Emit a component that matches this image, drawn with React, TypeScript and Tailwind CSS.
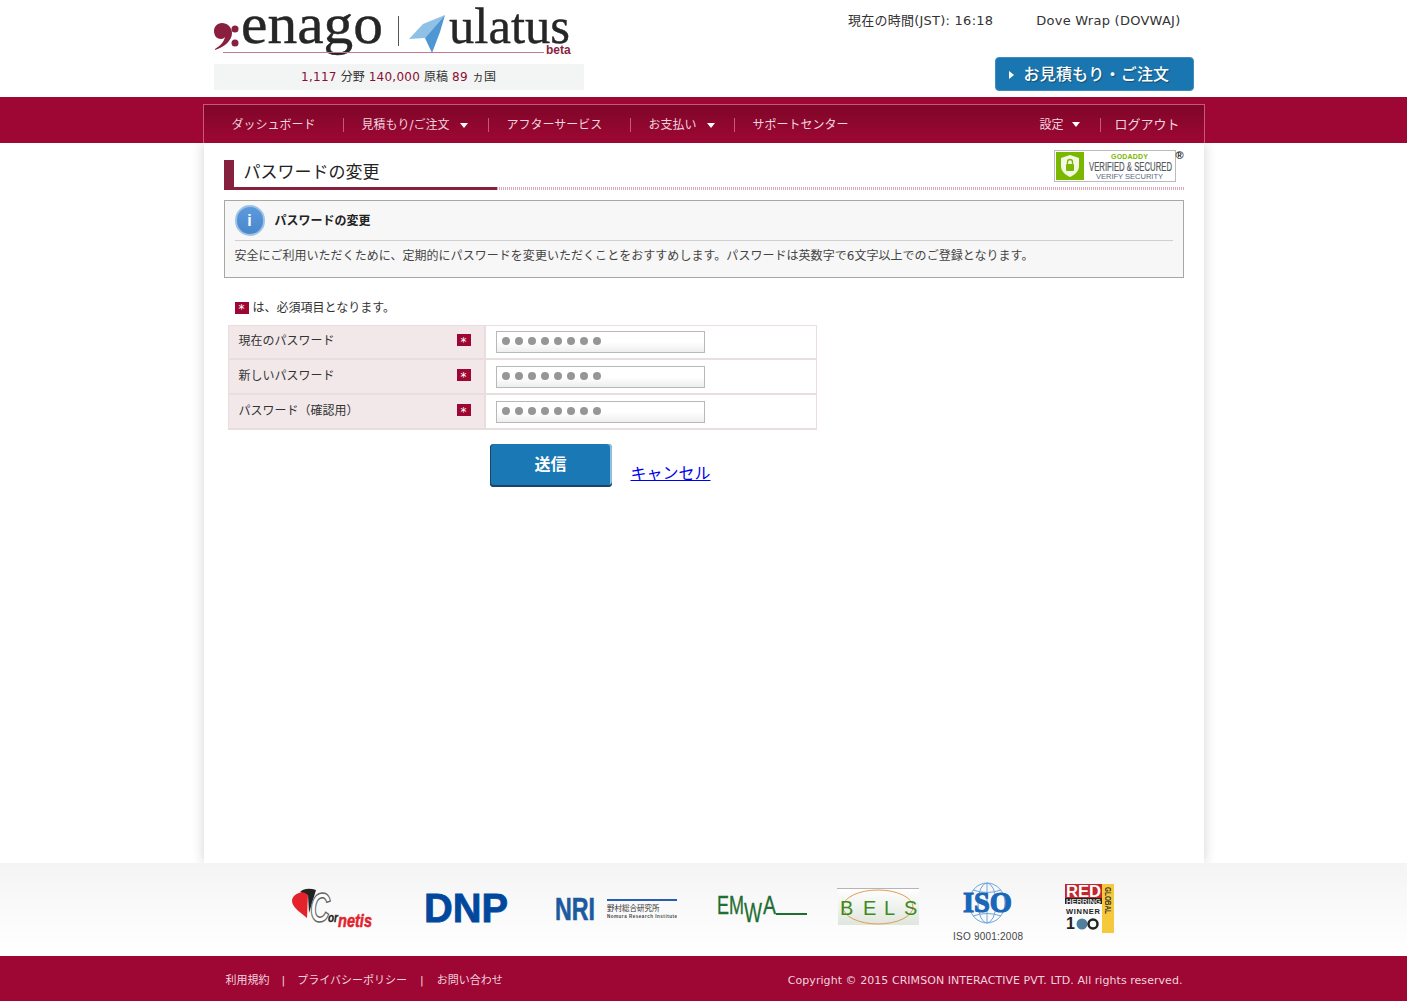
import type { ReactNode } from 'react';

const navLeft = [
  { label: 'ダッシュボード', cell: 'w-[140px] pl-[28px]' },
  { label: '見積もり/ご注文', cell: 'w-[145px] pl-[18px]', caret: true },
  { label: 'アフターサービス', cell: 'w-[142px] pl-[18px]' },
  { label: 'お支払い', cell: 'w-[104px] pl-[18px]', caret: true },
];

const fields = ['現在のパスワード', '新しいパスワード', 'パスワード（確認用）'];

function Caret({ className }: { className: string }) {
  return <span className={`inline-block h-0 w-0 border-x-[4px] border-t-[5px] border-x-transparent border-t-white ${className}`} />;
}

function Required() {
  return (
    <span className="flex h-[12px] w-[14px] items-center justify-center bg-[#9e0734] pt-[3px] text-[12px] leading-none text-white">*</span>
  );
}

function Sep({ className = '' }: { className?: string }) {
  return <span className={`h-[14px] w-px shrink-0 bg-[#c8587a] ${className}`} />;
}

function BrandLogo() {
  return (
    <svg width="370" height="60" viewBox="0 0 370 60" className="block">
      <path d="M1 50C10 47 18 41 18 33C18 27 13 23 8 23C3 23 0 27 0 31C0 36 3 39 7 39C9 39 10 38 11 37C10 42 6 46 1 49Z" fill="#8b1f40" />
      <circle cx="21" cy="29" r="3.5" fill="#8b1f40" />
      <circle cx="21" cy="43" r="3.5" fill="#8b1f40" />
      <text x="27" y="43" fontSize="56" fontFamily="'Liberation Serif', serif" fill="#262626" stroke="#262626" strokeWidth="0.4" textLength="142" lengthAdjust="spacingAndGlyphs">enago</text>
      <rect x="184" y="16" width="1" height="30" fill="#555" />
      <polygon points="231,15 209,24 195,39 211,38" fill="#8fc0e6" />
      <polygon points="231,15 211,38 218,53 226,32" fill="#4f96d2" />
      <text x="235" y="43" fontSize="50" fontFamily="'Liberation Serif', serif" fill="#262626" stroke="#262626" strokeWidth="0.4" textLength="121" lengthAdjust="spacingAndGlyphs">ulatus</text>
      <rect x="9" y="52" width="321" height="1" fill="#c27a90" />
      <text x="332" y="54" fontSize="12" fontWeight="700" fontFamily="'Liberation Sans', sans-serif" fill="#8b1f40">beta</text>
    </svg>
  );
}

function GoDaddySeal() {
  const sans = "'Liberation Sans', sans-serif";
  return (
    <svg width="122" height="32" viewBox="0 0 122 32" className="block shrink-0">
      <rect x="0.500" y="0.500" width="121" height="31" fill="#fff" stroke="#bbbbbb" />
      <rect x="2" y="2" width="28" height="28" fill="#7ab800" />
      <path d="M16 5L25 8V16C25 22 20 25 16 27C12 25 7 22 7 16V8Z" fill="#f3f8e6" />
      <rect x="12" y="14" width="8" height="7" rx="1" fill="#7ab800" />
      <path d="M13.500 14V12A2.500 2.500 0 0 1 18.500 12V14" fill="none" stroke="#7ab800" strokeWidth="1.300" />
      <text x="57" y="9" fontSize="7" fontWeight="700" fontFamily={sans} fill="#7ab800" textLength="37">GODADDY</text>
      <text x="35" y="21" fontSize="12" fontFamily={sans} fill="#555a60" stroke="#555a60" strokeWidth="0.200" textLength="83" lengthAdjust="spacingAndGlyphs">VERIFIED &amp; SECURED</text>
      <text x="42" y="29" fontSize="7.500" fontFamily={sans} fill="#5a6a84" textLength="67">VERIFY SECURITY</text>
    </svg>
  );
}

function PartnerSvg({ width, className, children }: { width: number; className: string; children: ReactNode }) {
  return (
    <svg width={width} height="62" viewBox={`0 0 ${width} 62`} className={`block shrink-0 ${className}`}>
      {children}
    </svg>
  );
}

function Partners() {
  const sans = "'Liberation Sans', sans-serif";
  const serif = "'Liberation Serif', serif";
  return (
    <div className="flex pl-[89px]">
      <PartnerSvg width={80} className="">
        <path d="M10 11C12 10 14 11 16 13L15 37C9 32 0 26 0 20C0 15 5 12 10 11Z" fill="#e3222b" />
        <path d="M8 11C12 7 18 7 24 9L17 32L16 14C14 12 11 11 8 11Z" fill="#222" />
        <text x="18" y="41" fontSize="42" fontWeight="700" fontStyle="italic" fontFamily={sans} fill="#fff" stroke="#666" strokeWidth="1.500" textLength="20" lengthAdjust="spacingAndGlyphs">C</text>
        <text x="36" y="41" fontSize="13" fontWeight="700" fontStyle="italic" fontFamily={sans} fill="#222" stroke="#222" strokeWidth="0.300" textLength="10" lengthAdjust="spacingAndGlyphs">or</text>
        <text x="46" y="46" fontSize="19" fontWeight="700" fontStyle="italic" fontFamily={sans} fill="#e3222b" stroke="#e3222b" strokeWidth="0.500" textLength="34" lengthAdjust="spacingAndGlyphs">netis</text>
      </PartnerSvg>
      <PartnerSvg width={84} className="ml-[52px]">
        <text x="0" y="41" fontSize="40" fontWeight="700" fontFamily={sans} fill="#00479d" stroke="#00479d" strokeWidth="0.800" textLength="84" lengthAdjust="spacingAndGlyphs">DNP</text>
      </PartnerSvg>
      <PartnerSvg width={122} className="ml-[47px]">
        <text x="0" y="39" fontSize="32" fontWeight="700" fontFamily={sans} fill="#1c5aa0" stroke="#1c5aa0" strokeWidth="0.600" textLength="40" lengthAdjust="spacingAndGlyphs">NRI</text>
        <rect x="52" y="18" width="70" height="2" fill="#2a5db0" />
        <text x="52" y="30" fontSize="7.500" fontFamily="'Noto Sans CJK JP', sans-serif" fill="#333">野村総合研究所</text>
        <text x="52" y="37" fontSize="4.500" fontWeight="700" fontFamily={sans} fill="#444" textLength="70">Nomura Research Institute</text>
      </PartnerSvg>
      <PartnerSvg width={91} className="ml-[39px]">
        <text x="1" y="33" fontSize="25" fontFamily={sans} fill="#1f6e32" stroke="#1f6e32" strokeWidth="0.300" textLength="27" lengthAdjust="spacingAndGlyphs">EM</text>
        <text x="28" y="41" fontSize="28" fontFamily={sans} fill="#1f6e32" stroke="#1f6e32" strokeWidth="0.300" textLength="18" lengthAdjust="spacingAndGlyphs">W</text>
        <text x="47" y="33" fontSize="25" fontFamily={sans} fill="#1f6e32" stroke="#1f6e32" strokeWidth="0.300" textLength="13" lengthAdjust="spacingAndGlyphs">A</text>
        <rect x="60" y="32" width="31" height="2" fill="#1f6e32" />
      </PartnerSvg>
      <PartnerSvg width={82} className="ml-[30px]">
        <defs>
          <linearGradient id="belsBg" x1="0" y1="0" x2="0" y2="1">
            <stop offset="0" stopColor="#ffffff" />
            <stop offset="1" stopColor="#dfe6dc" />
          </linearGradient>
        </defs>
        <rect x="1" y="7" width="81" height="37" fill="url(#belsBg)" />
        <rect x="0" y="7" width="82" height="1" fill="#b5b5b5" />
        <ellipse cx="41" cy="26" rx="35" ry="17" fill="none" stroke="#e39a55" strokeWidth="1" />
        <text x="3 26 47 67" y="34" fontSize="20" fontFamily={sans} fill="#3f8a1e">BELS</text>
      </PartnerSvg>
      <PartnerSvg width={70} className="ml-[34px]">
        <ellipse cx="34" cy="22" rx="18" ry="20" fill="none" stroke="#6ea6dc" strokeWidth="1" />
        <ellipse cx="34" cy="22" rx="9" ry="20" fill="none" stroke="#6ea6dc" strokeWidth="1" />
        <line x1="34" y1="2" x2="34" y2="42" stroke="#6ea6dc" strokeWidth="1" />
        <path d="M20 9Q34 14 48 9M20 35Q34 30 48 35" fill="none" stroke="#6ea6dc" strokeWidth="1" />
        <text x="10" y="31" fontSize="29" fontWeight="700" fontFamily={serif} fill="#1a66b8" stroke="#1a66b8" strokeWidth="1.200" textLength="49" lengthAdjust="spacingAndGlyphs">ISO</text>
        <text x="0" y="59" fontSize="10" fontFamily={sans} fill="#444" textLength="70">ISO 9001:2008</text>
      </PartnerSvg>
      <PartnerSvg width={49} className="ml-[42px]">
        <rect x="0" y="3" width="37" height="14" fill="#c1272d" />
        <rect x="0" y="17" width="37" height="6" fill="#222" />
        <rect x="37" y="3" width="12" height="49" fill="#f6c93c" />
        <text x="1" y="16" fontSize="16" fontWeight="700" fontFamily={sans} fill="#fff" textLength="35" lengthAdjust="spacingAndGlyphs">RED</text>
        <text x="1" y="22.500" fontSize="6.500" fontWeight="700" fontFamily={sans} fill="#ddd" textLength="35" lengthAdjust="spacingAndGlyphs">HERRING</text>
        <text x="1" y="33" fontSize="7.500" fontWeight="700" fontFamily={sans} fill="#222" textLength="34">WINNER</text>
        <text x="1" y="48" fontSize="16" fontWeight="700" fontFamily={sans} fill="#222">1</text>
        <circle cx="17" cy="43" r="5.500" fill="#4f7f9f" />
        <circle cx="28" cy="43" r="4.500" fill="none" stroke="#222" strokeWidth="2.500" />
        <text x="0" y="0" fontSize="9" fontWeight="700" fontFamily={sans} fill="#333" transform="translate(40 6) rotate(90)" textLength="27" lengthAdjust="spacingAndGlyphs">GLOBAL</text>
      </PartnerSvg>
    </div>
  );
}

export default function App() {
  return (
    <div className="flex min-h-[1001px] flex-col bg-white font-['DejaVu_Sans','Noto_Sans_CJK_JP',sans-serif] text-[12px] text-[#333333]">
      <header className="mx-auto flex h-[97px] w-[1002px] justify-between pl-[11px] pr-[11px]">
        <div className="w-[370px]">
          <BrandLogo />
          <p className="mt-[4px] flex h-[26px] items-center justify-center gap-[4px] bg-[#f3f5f4] text-[12px]">
            <span className="tracking-[0.25px] text-[#8c0d35]">1,117</span> 分野 <span className="tracking-[0.25px] text-[#8c0d35]">140,000</span> 原稿 <span className="tracking-[0.25px] text-[#8c0d35]">89</span> ヵ国
          </p>
        </div>
        <div className="flex flex-col items-end">
          <div className="flex gap-[43px] pr-[13px] pt-[12px] text-[13px] leading-[17px] tracking-[0.25px]">
            <span>現在の時間(JST): 16:18</span>
            <span>Dove Wrap (DOVWAJ)</span>
          </div>
          <a className="mt-[28px] flex h-[34px] w-[199px] items-center rounded-[4px] border border-[#3d8cbf] bg-[#1a76b0] pl-[13px] pt-px text-[16px] font-medium tracking-[0.2px] text-white [text-shadow:1px_1px_1px_rgba(0,0,0,0.35)]">
            <span className="h-0 w-0 border-y-[4px] border-l-[5px] border-y-transparent border-l-white" />
            <span className="ml-[10px]">お見積もり・ご注文</span>
          </a>
        </div>
      </header>

      <div className="relative z-10 h-[46px] bg-[#9e0734] pt-[7px]">
        <nav className="mx-auto flex h-[39px] w-[1002px] items-center border-x border-t border-[#c8587a] bg-gradient-to-b from-[#7f0628] to-[#9e0734] pt-[1px] text-[12px] text-[#f0d4de]">
          {navLeft.map((item) => (
            <div key={item.label} className={`flex items-center ${item.cell}`}>
              <span className="flex-1 whitespace-nowrap">
                {item.label}
                {item.caret && <Caret className="ml-[10px] align-middle" />}
              </span>
              <Sep />
            </div>
          ))}
          <span className="ml-[18px] whitespace-nowrap">サポートセンター</span>
          <span className="ml-auto flex items-center whitespace-nowrap">
            設定
            <Caret className="ml-[9px]" />
          </span>
          <Sep className="ml-[20px]" />
          <span className="ml-[13px] mr-[24px] whitespace-nowrap text-[13px]">ログアウト</span>
        </nav>
      </div>

      <main className="mx-auto h-[720px] w-[1000px] bg-white px-[20px] pt-[7px] shadow-[0_0_12px_rgba(0,0,0,0.18)]">
        <div className="flex h-[37px] items-start justify-between">
          <div className="mt-[10px] flex h-[27px] items-center border-l-[10px] border-[#86203f] pb-[2px] pl-[10px] text-[17px] leading-none text-[#222222]">
            パスワードの変更
          </div>
          <div className="flex items-start">
            <GoDaddySeal />
            <span className="w-[8px] font-['Liberation_Sans',sans-serif] text-[11px] font-bold leading-[11px] text-[#222222]">®</span>
          </div>
        </div>
        <div className="flex h-[3px]">
          <div className="w-[273px] bg-[#86203f]" />
          <div className="flex-1 bg-[repeating-linear-gradient(90deg,#d9a9b8_0,#d9a9b8_1px,#ffffff_1px,#ffffff_2px)]" />
        </div>

        <section className="mt-[10px] h-[78px] border border-[#a8a8a0] bg-[#f7f7f7] px-[10px] pt-[4px]">
          <div className="flex h-[36px] items-center border-b border-[#cfcfcf] pb-[4px]">
            <div className="flex h-[31px] w-[30px] items-center justify-center rounded-full border-2 border-[#9fc3e6] bg-gradient-to-b from-[#5b9bdc] to-[#4a86cc] font-['Liberation_Sans',sans-serif] text-[16px] font-bold text-white">
              i
            </div>
            <h2 className="ml-[10px] pt-px text-[12px] font-bold text-[#222222]">パスワードの変更</h2>
          </div>
          <p className="mt-[6px] text-[12px] leading-[18px] tracking-[0.04px] text-[#444444]">
            安全にご利用いただくために、定期的にパスワードを変更いただくことをおすすめします。パスワードは英数字で6文字以上でのご登録となります。
          </p>
        </section>

        <p className="mt-[23px] flex h-[13px] items-center pl-[11px] text-[12px]">
          <Required />
          <span className="ml-[4px]">は、必須項目となります。</span>
        </p>

        <div className="ml-[4px] mt-[11px] w-[589px]">
          {fields.map((label, i) => (
            <div key={label} className="flex h-[35px]">
              <div className={`flex w-[258px] items-start justify-between border-b-2 border-l border-r-2 border-[#eadde0] bg-[#f2e8ea] pl-[10px] pr-[13px] pt-[7px] leading-[18px] ${i === 0 ? 'shadow-[inset_0_1px_0_#eadde0]' : ''}`}>
                <span>{label}</span>
                <span className="mt-[2px]"><Required /></span>
              </div>
              <div className={`flex flex-1 border-b-2 border-r border-[#eadde0] pl-[10px] pt-[6px] ${i === 0 ? 'shadow-[inset_0_1px_0_#eadde0]' : ''}`}>
                <div className="flex h-[22px] w-[209px] items-center gap-[5px] border border-[#b8b8b8] bg-gradient-to-b from-white via-white to-[#eeeeee] pb-[3px] pl-[5px]">
                  {Array.from({ length: 8 }, (_, d) => (
                    <span key={d} className="h-[8px] w-[8px] rounded-full bg-[#969696]" />
                  ))}
                </div>
              </div>
            </div>
          ))}
        </div>

        <div className="ml-[266px] mt-[14px] flex items-end">
          <button className="h-[43px] w-[122px] rounded-[4px] bg-[#1a78b4] pb-[2px] text-[16px] font-bold text-white shadow-[inset_0_-2px_0_#16466a,inset_1px_0_0_#16466a,inset_-2px_0_0_#8fc0e0]">
            送信
          </button>
          <a className="mb-[2px] ml-[19px] text-[16px] leading-[22px] text-[#0000ee] underline">キャンセル</a>
        </div>
      </main>

      <div className="relative h-[93px] bg-gradient-to-b from-[#f4f4f4] to-white pt-[18px]">
        <div className="mx-auto w-[1002px]">
          <Partners />
        </div>
      </div>

      <footer className="h-[45px] bg-[#9e0734] text-[11px] text-[#f0d4de]">
        <div className="mx-auto flex h-full w-[1002px] items-center justify-between pl-[23px] pr-[22px] pt-[6px]">
          <div className="flex items-center">
            <span>利用規約</span>
            <span className="mx-[12px]">|</span>
            <span>プライバシーポリシー</span>
            <span className="mx-[13px]">|</span>
            <span>お問い合わせ</span>
          </div>
          <span className="tracking-[0.05px]">Copyright © 2015 CRIMSON INTERACTIVE PVT. LTD. All rights reserved.</span>
        </div>
      </footer>
    </div>
  );
}
